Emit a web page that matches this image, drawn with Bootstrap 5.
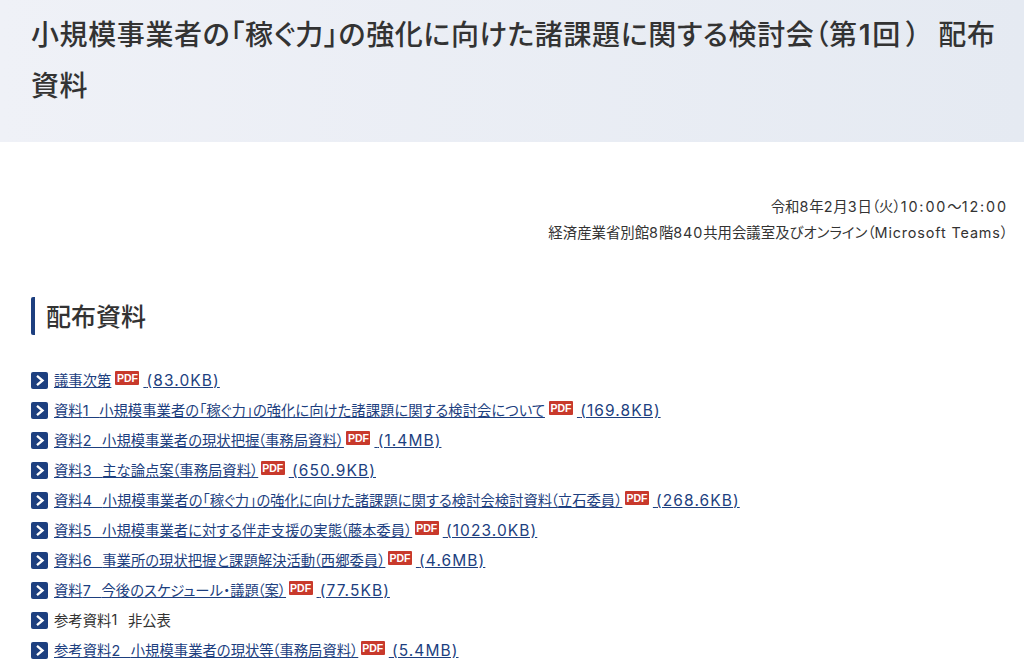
<!DOCTYPE html>
<html lang="ja">
<head>
<meta charset="utf-8">
<title>配布資料</title>
<link href="https://cdn.jsdelivr.net/npm/bootstrap@5.3.0/dist/css/bootstrap.min.css" rel="stylesheet">
<style>
html,body{height:670px;overflow:hidden}
body{font-family:"Noto Sans CJK JP","Noto Sans",sans-serif;font-feature-settings:"palt";color:#333;background:#fff}
.hero-band{height:142px;padding:9px 24px 0 31px;background:linear-gradient(90deg,#eff1f7,#e5eaf2)}
.hero-title{font-size:28px;line-height:49px;font-weight:500;margin:0;color:#333;letter-spacing:.022em}
.hero-num{font-family:Inter,sans-serif;font-weight:600;margin:0 1px}
.hero-close{margin:0 11px 0 5px}
.meta-block{padding:52px 16px 0 0;font-size:14.4px;line-height:24.5px;text-align:right}
.sect-head{margin:52px 0 0 31px;padding-left:11px;height:38px;line-height:36px;font-size:25px;font-weight:500;border-left:4px solid #1d3f7f;border-radius:2px}
.doc-list{list-style:none;margin:30px 0 0 31px;padding:0;font-size:14.35px}
.doc-list li{height:30px;line-height:30px;display:flex;align-items:center;white-space:pre}
.doc-list a{color:#1d3f7f;text-decoration:underline}
.arrow-box{width:17px;height:17px;border-radius:2px;background:#1d3f7f;margin-right:6px;flex:none;display:block}
.pdf-tag{display:inline-block;width:24px;height:14px;margin:0 4px;background:#c8392b;border-radius:1px;color:#fff;font:700 10.5px/14px "Liberation Sans",sans-serif;text-align:center;vertical-align:3.5px;text-decoration:none}
.lat{font-family:Inter,sans-serif;letter-spacing:.06em}
.time-wide{letter-spacing:.13em}
.file-size{font-family:Inter,sans-serif;font-size:15.5px;letter-spacing:.07em}
.pl{margin-left:-1.5px}
.pr{margin-right:-1.5px}
</style>
</head>
<body>
<header class="hero-band"><h1 class="hero-title">小規模事業者の「稼ぐ力」の強化に向けた諸課題に関する検討会（第<span class="hero-num">1</span>回<span class="hero-close">）</span> 配布<br>資料</h1></header>
<div class="meta-block"><div>令和<span class="lat">8</span>年<span class="lat">2</span>月<span class="lat">3</span>日（火）<span class="lat time-wide">10:00</span>～<span class="lat time-wide">12:00</span></div><div>経済産業省別館<span class="lat">8</span>階<span class="lat">840</span>共用会議室及びオンライン（<span class="lat">Microsoft Teams</span>）</div></div>
<h2 class="sect-head">配布資料</h2>
<ul class="doc-list">
<li><svg class="arrow-box" viewBox="0 0 17 17"><path d="M6 3.8l5.5 4.7L6 13.2" fill="none" stroke="#fff" stroke-width="2.4"/></svg><a href="#">議事次第<span class="pdf-tag">PDF</span> <span class="file-size">(83.0KB)</span></a></li>
<li><svg class="arrow-box" viewBox="0 0 17 17"><path d="M6 3.8l5.5 4.7L6 13.2" fill="none" stroke="#fff" stroke-width="2.4"/></svg><a href="#">資料<span class="lat">1  </span>小規模事業者の「稼ぐ力」の強化に向けた諸課題に関する検討会について<span class="pdf-tag">PDF</span> <span class="file-size">(169.8KB)</span></a></li>
<li><svg class="arrow-box" viewBox="0 0 17 17"><path d="M6 3.8l5.5 4.7L6 13.2" fill="none" stroke="#fff" stroke-width="2.4"/></svg><a href="#">資料<span class="lat">2  </span>小規模事業者の現状把握<span class="pl">（</span>事務局資料<span class="pr">）</span><span class="pdf-tag">PDF</span> <span class="file-size">(1.4MB)</span></a></li>
<li><svg class="arrow-box" viewBox="0 0 17 17"><path d="M6 3.8l5.5 4.7L6 13.2" fill="none" stroke="#fff" stroke-width="2.4"/></svg><a href="#">資料<span class="lat">3  </span>主な論点案<span class="pl">（</span>事務局資料<span class="pr">）</span><span class="pdf-tag">PDF</span> <span class="file-size">(650.9KB)</span></a></li>
<li><svg class="arrow-box" viewBox="0 0 17 17"><path d="M6 3.8l5.5 4.7L6 13.2" fill="none" stroke="#fff" stroke-width="2.4"/></svg><a href="#">資料<span class="lat">4  </span>小規模事業者の「稼ぐ力」の強化に向けた諸課題に関する検討会検討資料<span class="pl">（</span>立石委員<span class="pr">）</span><span class="pdf-tag">PDF</span> <span class="file-size">(268.6KB)</span></a></li>
<li><svg class="arrow-box" viewBox="0 0 17 17"><path d="M6 3.8l5.5 4.7L6 13.2" fill="none" stroke="#fff" stroke-width="2.4"/></svg><a href="#">資料<span class="lat">5  </span>小規模事業者に対する伴走支援の実態<span class="pl">（</span>藤本委員<span class="pr">）</span><span class="pdf-tag">PDF</span> <span class="file-size">(1023.0KB)</span></a></li>
<li><svg class="arrow-box" viewBox="0 0 17 17"><path d="M6 3.8l5.5 4.7L6 13.2" fill="none" stroke="#fff" stroke-width="2.4"/></svg><a href="#">資料<span class="lat">6  </span>事業所の現状把握と課題解決活動<span class="pl">（</span>西郷委員<span class="pr">）</span><span class="pdf-tag">PDF</span> <span class="file-size">(4.6MB)</span></a></li>
<li><svg class="arrow-box" viewBox="0 0 17 17"><path d="M6 3.8l5.5 4.7L6 13.2" fill="none" stroke="#fff" stroke-width="2.4"/></svg><a href="#">資料<span class="lat">7  </span>今後のスケジュール・議題<span class="pl">（</span>案<span class="pr">）</span><span class="pdf-tag">PDF</span> <span class="file-size">(77.5KB)</span></a></li>
<li><svg class="arrow-box" viewBox="0 0 17 17"><path d="M6 3.8l5.5 4.7L6 13.2" fill="none" stroke="#fff" stroke-width="2.4"/></svg>参考資料<span class="lat">1  </span>非公表</li>
<li><svg class="arrow-box" viewBox="0 0 17 17"><path d="M6 3.8l5.5 4.7L6 13.2" fill="none" stroke="#fff" stroke-width="2.4"/></svg><a href="#">参考資料<span class="lat">2  </span>小規模事業者の現状等<span class="pl">（</span>事務局資料<span class="pr">）</span><span class="pdf-tag">PDF</span> <span class="file-size">(5.4MB)</span></a></li>
</ul>
<script src="https://cdn.jsdelivr.net/npm/bootstrap@5.3.0/dist/js/bootstrap.bundle.min.js"></script>
</body>
</html>
